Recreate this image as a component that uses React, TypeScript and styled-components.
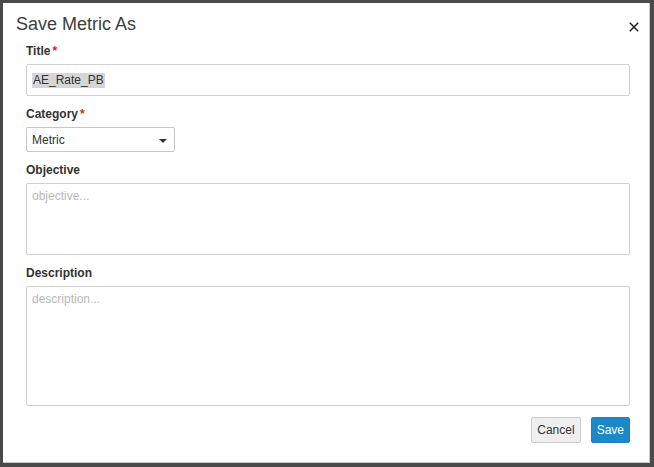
import { FunctionComponent, ReactNode } from 'react';
import styled, { createGlobalStyle } from 'styled-components';

const GlobalStyle = createGlobalStyle`
    html, body {
        margin: 0;
        padding: 0;
        background: #4a4a4a;
        font-family: "Liberation Sans", Arial, sans-serif;
    }
`;

interface IField {
    label: string,
    required?: boolean,
    children: ReactNode,
}

const Field: FunctionComponent<IField> = (p) => (
    <StyledField>
        <Label>
            {p.label}
            {p.required && <span className="req">*</span>}
        </Label>
        {p.children}
    </StyledField>
);

export default function App() {
    return (
        <>
            <GlobalStyle />
            <Backdrop>
                <Dialog>
                    <Header>
                        <h2>Save Metric As</h2>
                        <CloseButton aria-label="close">
                            <svg width="10" height="10" viewBox="0 0 10 10">
                                <path d="M0.8 0.8 L9.2 9.2 M9.2 0.8 L0.8 9.2" stroke="#1e1e1e" strokeWidth="1.5" />
                            </svg>
                        </CloseButton>
                    </Header>

                    <Form>
                        <Field label="Title" required>
                            <TextInput>
                                <span className="selected">AE_Rate_PB</span>
                            </TextInput>
                        </Field>

                        <Field label="Category" required>
                            <Select>
                                <span>Metric</span>
                                <span className="caret" />
                            </Select>
                        </Field>

                        <Field label="Objective">
                            <TextArea $height={72}>objective...</TextArea>
                        </Field>

                        <Field label="Description">
                            <TextArea $height={120}>description...</TextArea>
                        </Field>
                    </Form>

                    <Footer>
                        <Button>Cancel</Button>
                        <Button $primary>Save</Button>
                    </Footer>
                </Dialog>
            </Backdrop>
        </>
    );
}

const Backdrop = styled.div`
    width: 654px;
    height: 467px;
    padding: 3px 4px 4px 3px;
    box-sizing: border-box;
    display: flex;
`;

const Dialog = styled.div`
    flex: 1;
    background: #fff;
    border-right: 1px solid #c8c8c8;
    border-bottom: 1px solid #c8c8c8;
    display: flex;
    flex-direction: column;
    box-sizing: border-box;
`;

const Header = styled.div`
    display: flex;
    justify-content: space-between;
    align-items: flex-start;
    padding: 11px 10px 0 13px;

    h2 {
        margin: 0;
        font-size: 18px;
        line-height: 20px;
        font-weight: normal;
        color: #3d3d3d;
    }
`;

const CloseButton = styled.button`
    border: none;
    background: none;
    padding: 0;
    margin-top: 8px;
    width: 10px;
    height: 10px;
    display: flex;
    cursor: pointer;
`;

const Form = styled.div`
    display: flex;
    flex-direction: column;
    gap: 11px;
    padding: 10px 19px 0 23px;
`;

const StyledField = styled.div`
    display: flex;
    flex-direction: column;
    gap: 6px;
`;

const Label = styled.label`
    font-size: 12px;
    line-height: 14px;
    font-weight: bold;
    color: #333;

    .req {
        color: #e0231c;
        margin-left: 2px;
    }
`;

const TextInput = styled.div`
    height: 32px;
    border: 1px solid #cfcfcf;
    border-radius: 2px;
    box-sizing: border-box;
    display: flex;
    align-items: center;
    padding: 0 5px;
    font-size: 12px;
    color: #333;

    .selected {
        background: #d6d6d6;
        line-height: 15px;
        padding: 0 1px;
    }
`;

const Select = styled.div`
    width: 149px;
    height: 25px;
    border: 1px solid #c6c6c6;
    border-radius: 2px;
    box-sizing: border-box;
    display: flex;
    align-items: center;
    justify-content: space-between;
    padding: 0 7px 0 5px;
    font-size: 12px;
    color: #333;

    .caret {
        width: 0;
        height: 0;
        border-left: 4px solid transparent;
        border-right: 4px solid transparent;
        border-top: 4px solid #333;
        margin-top: 2px;
    }
`;

const TextArea = styled.div<{ $height: number }>`
    height: ${(p) => p.$height}px;
    border: 1px solid #cfcfcf;
    border-radius: 2px;
    box-sizing: border-box;
    padding: 5px 5px;
    font-size: 12px;
    line-height: 15px;
    color: #b8b8b8;
`;

const Footer = styled.div`
    display: flex;
    justify-content: flex-end;
    gap: 10px;
    padding: 11px 19px 0 0;
`;

const Button = styled.button<{ $primary?: boolean }>`
    height: 26px;
    padding: 0 5px;
    border-radius: 2px;
    font-family: "Liberation Sans", Arial, sans-serif;
    font-size: 12px;
    cursor: pointer;
    border: 1px solid ${(p) => (p.$primary ? '#1783c4' : '#cdcdcd')};
    background: ${(p) => (p.$primary ? '#1a88c9' : '#efefef')};
    color: ${(p) => (p.$primary ? '#fff' : '#333')};
`;
